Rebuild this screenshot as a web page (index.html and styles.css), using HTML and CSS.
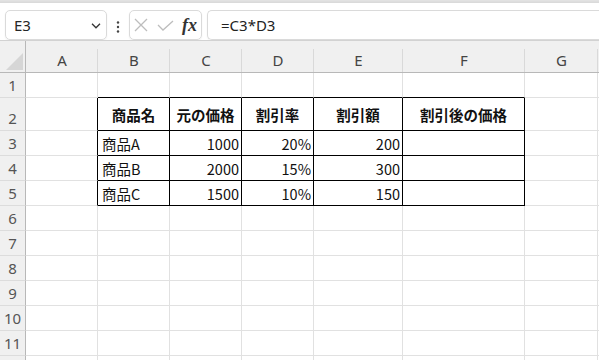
FILE: index.html
```html
<!DOCTYPE html>
<html lang="ja">
<head>
<meta charset="utf-8">
<link rel="stylesheet" href="styles.css">
</head>
<body>
<div class="app">
  <div class="strip"></div>
  <div class="toolbar">
    <div class="namebox">
      <span class="ref">E3</span>
      <svg class="chev" width="10" height="6" viewBox="0 0 10 6"><path d="M1 0.8 L5 4.8 L9 0.8" fill="none" stroke="#333" stroke-width="1.3"/></svg>
    </div>
    <svg class="dots" width="4" height="12" viewBox="0 0 4 12"><circle cx="2" cy="1.5" r="1.2" fill="#444"/><circle cx="2" cy="6" r="1.2" fill="#444"/><circle cx="2" cy="10.5" r="1.2" fill="#444"/></svg>
    <div class="fxbox">
      <svg width="14" height="14" viewBox="0 0 14 14"><path d="M1 1 L13 13 M13 1 L1 13" stroke="#bdbdbd" stroke-width="1.3" fill="none"/></svg>
      <svg width="17" height="11" viewBox="0 0 17 11"><path d="M1 5 L6 10 L16 1" stroke="#bdbdbd" stroke-width="1.3" fill="none"/></svg>
      <span class="fx">fx</span>
    </div>
    <div class="formula">=C3*D3</div>
  </div>
  <div class="sheet">
    <div class="corner"><svg width="17" height="17" viewBox="0 0 17 17"><path d="M17 0 L17 17 L0 17 Z" fill="#d6d6d6"/></svg></div>
    <div class="ch">A</div><div class="ch">B</div><div class="ch">C</div><div class="ch">D</div><div class="ch">E</div><div class="ch">F</div><div class="ch">G</div><div class="ch last"></div>

    <div class="rh">1</div><div class="c"></div><div class="c tt"></div><div class="c tt"></div><div class="c tt"></div><div class="c tt"></div><div class="c tt"></div><div class="c"></div><div class="c"></div>

    <div class="rh">2</div><div class="c tl"></div><div class="c tb h">商品名</div><div class="c tb h">元の価格</div><div class="c tb h">割引率</div><div class="c tb h">割引額</div><div class="c tb h">割引後の価格</div><div class="c"></div><div class="c"></div>

    <div class="rh">3</div><div class="c tl"></div><div class="c tb">商品A</div><div class="c tb n">1000</div><div class="c tb n">20%</div><div class="c tb n">200</div><div class="c tb"></div><div class="c"></div><div class="c"></div>

    <div class="rh">4</div><div class="c tl"></div><div class="c tb">商品B</div><div class="c tb n">2000</div><div class="c tb n">15%</div><div class="c tb n">300</div><div class="c tb"></div><div class="c"></div><div class="c"></div>

    <div class="rh">5</div><div class="c tl"></div><div class="c tb">商品C</div><div class="c tb n">1500</div><div class="c tb n">10%</div><div class="c tb n">150</div><div class="c tb"></div><div class="c"></div><div class="c"></div>

    <div class="rh">6</div><div class="c"></div><div class="c"></div><div class="c"></div><div class="c"></div><div class="c"></div><div class="c"></div><div class="c"></div><div class="c"></div>
    <div class="rh">7</div><div class="c"></div><div class="c"></div><div class="c"></div><div class="c"></div><div class="c"></div><div class="c"></div><div class="c"></div><div class="c"></div>
    <div class="rh">8</div><div class="c"></div><div class="c"></div><div class="c"></div><div class="c"></div><div class="c"></div><div class="c"></div><div class="c"></div><div class="c"></div>
    <div class="rh">9</div><div class="c"></div><div class="c"></div><div class="c"></div><div class="c"></div><div class="c"></div><div class="c"></div><div class="c"></div><div class="c"></div>
    <div class="rh">10</div><div class="c"></div><div class="c"></div><div class="c"></div><div class="c"></div><div class="c"></div><div class="c"></div><div class="c"></div><div class="c"></div>
    <div class="rh">11</div><div class="c"></div><div class="c"></div><div class="c"></div><div class="c"></div><div class="c"></div><div class="c"></div><div class="c"></div><div class="c"></div>
    <div class="rh"></div><div class="c"></div><div class="c"></div><div class="c"></div><div class="c"></div><div class="c"></div><div class="c"></div><div class="c"></div><div class="c"></div>
  </div>
</div>
</body>
</html>
```
FILE: styles.css
```css
* { box-sizing: border-box; }
html, body { margin: 0; padding: 0; background: #fff; }
body { width: 599px; height: 360px; overflow: hidden; font-family: "Noto Sans", "Open Sans", sans-serif; }
.app { width: 599px; height: 360px; overflow: hidden; }
.strip { height: 3px; background: linear-gradient(#e4e4e4, #d8d8d8); }
.toolbar { height: 37px; display: flex; align-items: flex-start; padding-top: 7px; padding-left: 5px; overflow: hidden; background: #fff; }
.namebox { flex: none; width: 102px; height: 30px; border: 1px solid #dadada; border-radius: 5px; display: flex; align-items: center; justify-content: space-between; padding: 0 5px 0 8px; box-shadow: 0 1px 2px rgba(0,0,0,0.06); }
.ref { font-size: 15px; color: #262626; }
.chev { margin-top: 1px; }
.dots { margin: 11px 9px 0 9px; flex: none; }
.fxbox { width: 73px; height: 30px; border: 1px solid #dadada; border-radius: 5px; display: flex; align-items: center; padding-left: 4px; gap: 9px; box-shadow: 0 1px 2px rgba(0,0,0,0.06); flex: none; }
.fx { font-family: "Liberation Serif", "DejaVu Serif", serif; font-style: italic; font-weight: bold; font-size: 18px; color: #333; margin-left: -1px; }
.formula { flex: none; width: 420px; height: 30px; margin-left: 5px; border: 1px solid #dadada; border-right: none; border-radius: 5px 0 0 5px; display: flex; align-items: center; padding-left: 13px; font-size: 15px; color: #222; box-shadow: 0 1px 2px rgba(0,0,0,0.06); }
.sheet { display: grid; grid-template-columns: 26px 72px 72px 72px 72px 89px 122px 73px 40px; grid-template-rows: 32px 25px 33px repeat(10, 25px); border-top: 1px solid #d2d2d2; width: 638px; }
.corner { background: #f0f0f0; border-right: 1px solid #b8b8b8; border-bottom: 1px solid #b8b8b8; display: flex; align-items: flex-end; justify-content: flex-end; padding: 0 2px 2px 0; }
.ch { background: linear-gradient(#d9d9d9, #d9d9d9) right 8px / 1px calc(100% - 8px) no-repeat, #f0f0f0; border-bottom: 1px solid #b8b8b8; display: flex; align-items: center; justify-content: center; padding-top: 6px; font-size: 15px; color: #444; }
.rh { background: #f0f0f0; border-right: 1px solid #b8b8b8; border-bottom: 1px solid #dcdcdc; display: flex; align-items: flex-end; justify-content: center; font-size: 15px; line-height: 20px; padding-bottom: 2px; color: #555; }
.c { border-right: 1px solid #e1e1e1; border-bottom: 1px solid #e1e1e1; display: flex; align-items: center; padding: 0 2px 0 4px; font-family: "Noto Sans CJK JP", sans-serif; font-size: 14.5px; color: #111; white-space: nowrap; overflow: hidden; }
.tt { border-bottom-color: #000; }
.tl { border-right-color: #000; }
.tb { border-right-color: #000; border-bottom-color: #000; }
.h { font-weight: bold; justify-content: center; padding: 0; }
.n { justify-content: flex-end; }
```
